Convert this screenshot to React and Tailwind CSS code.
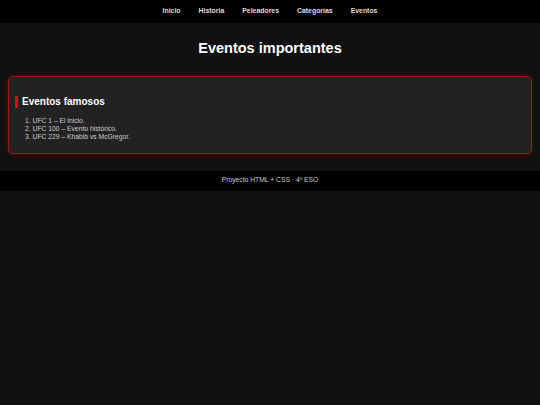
export default function App() {
  const items = [
    "1. UFC 1 – El inicio.",
    "2. UFC 100 – Evento histórico.",
    "3. UFC 229 – Khabib vs McGregor.",
  ];
  return (
    <div className="min-h-[405px] bg-[#111111] font-['Liberation_Sans',Arial,sans-serif]">
      <nav className="h-[23px] bg-black flex justify-center items-center gap-[18px] text-[6.9px] font-bold text-[#dddddd]">
        <span>Inicio</span>
        <span>Historia</span>
        <span>Peleadores</span>
        <span>Categorías</span>
        <span>Eventos</span>
      </nav>
      <main className="pt-[17px] mx-[8px]">
        <h1 className="text-center text-[14.5px] font-bold text-white leading-[17px]">
          Eventos importantes
        </h1>
        <section className="mt-[19px] border border-[#a51515] rounded-[5px] bg-[#222222] pl-[6px] pt-[19px] pb-[12px] shadow-[0_0_5px_rgba(200,16,16,0.4)]">
          <h2 className="border-l-[3px] border-[#e50914] pl-[4px] text-[10px] leading-[11.5px] font-bold text-white">
            Eventos famosos
          </h2>
          <div className="mt-[9px] pl-[10px] text-[6.75px] leading-[8px] text-[#cccccc]">
            {items.map((t) => (
              <div key={t}>{t}</div>
            ))}
          </div>
        </section>
      </main>
      <footer className="mt-[17px] h-[20px] bg-black flex items-center justify-center text-[6.75px] text-[#cccccc]">
        Proyecto HTML + CSS · 4º ESO
      </footer>
    </div>
  );
}
